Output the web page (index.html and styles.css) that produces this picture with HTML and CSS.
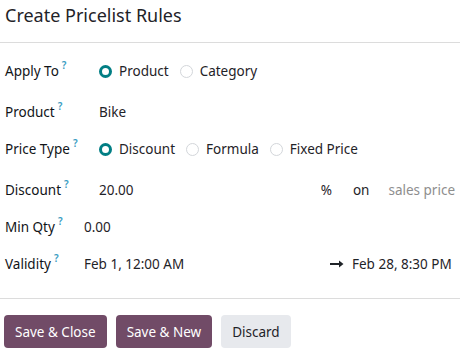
FILE: index.html
```html
<!DOCTYPE html>
<html>
<head>
<meta charset="utf-8">
<link rel="stylesheet" href="styles.css">
</head>
<body>
<div class="dialog">
  <header class="head"><h1 class="title">Create Pricelist Rules</h1></header>
  <main class="body">
    <div class="row">
      <div class="label">Apply To<sup class="q">?</sup></div>
      <div class="value radios">
        <span class="radio on"></span><span class="rtext">Product</span>
        <span class="radio"></span><span class="rtext">Category</span>
      </div>
    </div>
    <div class="row tall">
      <div class="label">Product<sup class="q">?</sup></div>
      <div class="value">Bike</div>
    </div>
    <div class="row">
      <div class="label">Price Type<sup class="q">?</sup></div>
      <div class="value radios">
        <span class="radio on"></span><span class="rtext">Discount</span>
        <span class="radio"></span><span class="rtext">Formula</span>
        <span class="radio"></span><span class="rtext">Fixed Price</span>
      </div>
    </div>
    <div class="row tall">
      <div class="label">Discount<sup class="q">?</sup></div>
      <div class="value disc">
        <span class="grow">20.00</span>
        <span class="pct">%</span>
        <span class="on-word">on</span>
        <span class="muted">sales price</span>
      </div>
    </div>
    <div class="row narrow">
      <div class="label">Min Qty<sup class="q">?</sup></div>
      <div class="value">0.00</div>
    </div>
    <div class="row narrow">
      <div class="label">Validity<sup class="q">?</sup></div>
      <div class="value validity">
        <span class="grow">Feb 1, 12:00 AM</span>
        <svg class="arrow" width="14" height="8" viewBox="0 0 14 8"><path d="M0 4H10" stroke="#1f2328" stroke-width="2"/><path d="M9 0.5L13.5 4L9 7.5Z" fill="#1f2328"/></svg>
        <span class="end">Feb 28, 8:30 PM</span>
      </div>
    </div>
  </main>
  <footer class="foot">
    <button class="btn primary">Save &amp; Close</button>
    <button class="btn primary">Save &amp; New</button>
    <button class="btn secondary">Discard</button>
  </footer>
</div>
</body>
</html>
```
FILE: styles.css
```css
html, body { margin: 0; padding: 0; background: #fff; }
body {
  font-family: "Noto Sans", "Open Sans", sans-serif;
  color: #1f2328;
  font-size: 13px;
  width: 460px;
  height: 352px;
  overflow: hidden;
}
.head {
  height: 43px;
  border-bottom: 1px solid #dcdcdc;
  box-sizing: border-box;
  padding: 0 5px;
}
.title {
  margin: 0;
  font-weight: 400;
  font-size: 18px;
  line-height: 30px;
}
.body {
  padding: 16px 5px 22px 5px;
  display: flex;
  flex-direction: column;
  gap: 13px;
  border-bottom: 1px solid #dcdcdc;
}
.row {
  display: flex;
  align-items: center;
  height: 24px;
}
.row.tall { margin-top: 4px; }
.label {
  width: 94px;
  flex: none;
  font-size: 13.5px;
  font-weight: 400;
  white-space: nowrap;
  color: #111418;
}
.row.narrow .label { width: 79px; }
.q {
  color: #3a9cc2;
  font-size: 10px;
  font-weight: 600;
  margin-left: 3px;
  vertical-align: 7px;
  line-height: 0;
}
.value {
  flex: 1;
  display: flex;
  align-items: center;
  font-size: 13.5px;
}
.radios .radio {
  width: 13px;
  height: 13px;
  border-radius: 50%;
  border: 1px solid #d3d6da;
  box-sizing: border-box;
  margin-right: 7px;
  flex: none;
}
.radios .radio.on {
  border: 3.5px solid #017e84;
  background: #fff;
}
.rtext { margin-right: 11px; }
.grow { flex: 1; }
.pct { margin-right: 21px; }
.on-word { margin-right: 19px; }
.muted { color: #8e8e8e; }
.arrow { margin-right: 8px; }
.end { width: 103px; }
.foot {
  display: flex;
  gap: 9px;
  padding: 16px 4px 0 4px;
}
.btn {
  font-family: inherit;
  font-size: 13.5px;
  height: 33px;
  border: none;
  border-radius: 4px;
  padding: 0 11px;
  cursor: pointer;
}
.btn.primary { background: #714b67; color: #fff; }
.btn.secondary { background: #e7e9ed; color: #1f2328; }
```
